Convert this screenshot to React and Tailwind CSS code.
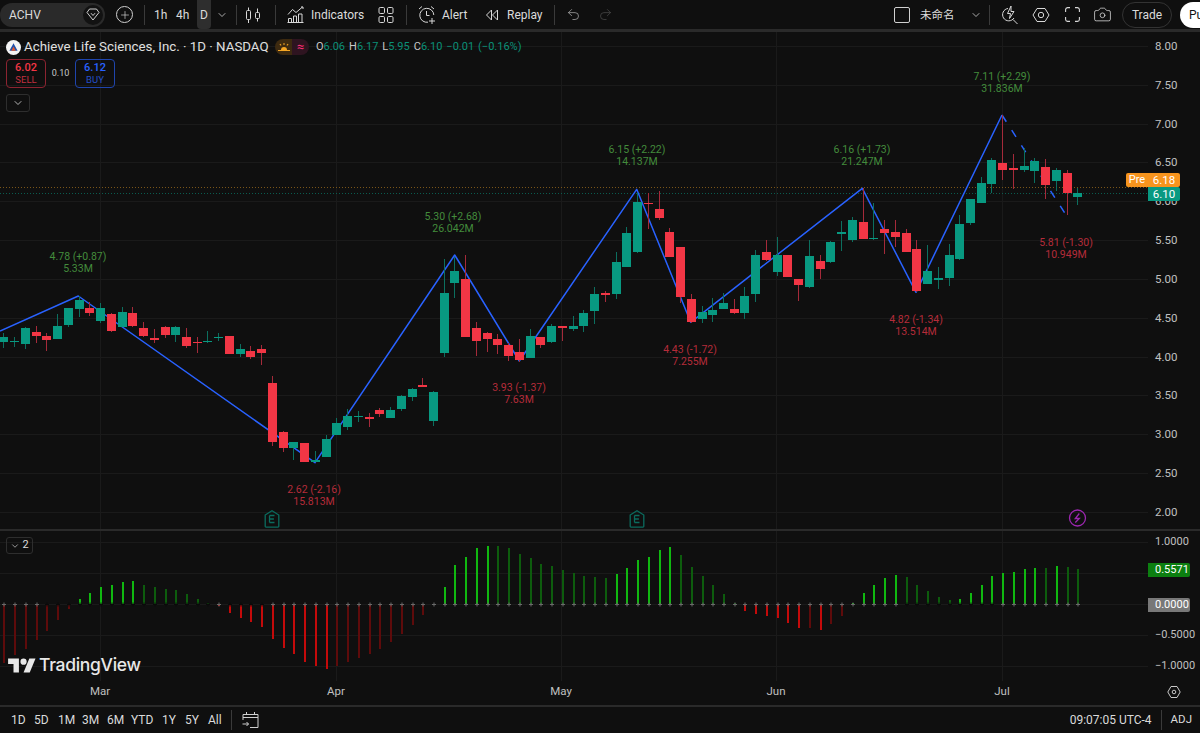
import { ChevronDown, Undo2, Redo2, Camera, Plus } from 'lucide-react';

const GREEN = '#089981';
const RED = '#f23645';
const GREEN_WICK = '#0c6f5f';
const RED_WICK = '#a52a3a';

// rows: color, wick top, body top, body bottom, wick bottom (read off the zoomed crops)
const group = (offset, rows) =>
    rows.map(([c, a, b, d, e]) => ({ c, a: offset + a / 3, b: offset + b / 3, d: offset + d / 3, e: offset + e / 3 }));

const candles = [
    ...group(240, [
        ['g', 280, 292, 305, 323], ['g', 290, 303, 307, 320], ['g', 262, 263, 311, 328], ['r', 258, 277, 288, 308],
        ['r', 278, 287, 299, 332], ['g', 222, 259, 296, 297], ['g', 203, 205, 254, 260], ['g', 168, 179, 207, 232],
        ['r', 187, 203, 220, 228], ['g', 190, 205, 244, 250], ['r', 220, 221, 274, 275], ['g', 200, 215, 262, 262],
        ['r', 200, 219, 258, 260], ['r', 247, 265, 288, 290], ['r', 267, 293, 299, 310], ['r', 258, 262, 284, 295],
        ['g', 257, 262, 284, 305], ['r', 263, 292, 318, 325], ['r', 292, 306, 310, 338], ['g', 273, 303, 306, 310],
        ['g', 280, 291, 293, 303], ['r', 287, 288, 341, 342], ['g', 312, 328, 341, 352], ['r', 318, 332, 351, 356],
        ['r', 316, 326, 339, 375], ['r', 408, 428, 606, 617], ['r', 572, 576, 624, 635], ['g', 606, 607, 624, 660],
        ['r', 610, 610, 665, 665], ['g', 633, 660, 665, 665], ['g', 586, 596, 651, 651], ['g', 534, 549, 584, 585],
        ['g', 508, 529, 560, 570], ['g', 514, 528, 531, 546], ['r', 520, 531, 536, 560], ['r', 505, 509, 521, 530],
        ['g', 500, 509, 534, 535], ['g', 465, 469, 506, 512], ['g', 445, 446, 471, 484], ['r', 413, 436, 441, 442],
        ['g', 452, 455, 542, 558],
    ]),
    ...group(140, [
        ['g', 357, 460, 638, 652], ['g', 350, 393, 429, 473], ['r', 345, 416, 592, 592], ['r', 545, 565, 602, 647],
        ['r', 575, 580, 596, 635], ['r', 582, 596, 614, 643], ['r', 608, 614, 647, 662], ['r', 598, 636, 659, 665],
        ['g', 568, 587, 653, 655], ['r', 590, 591, 614, 625], ['g', 553, 558, 606, 608], ['r', 558, 558, 563, 603],
        ['g', 527, 559, 568, 572], ['g', 510, 519, 558, 575], ['g', 440, 462, 514, 553], ['r', 452, 460, 466, 486],
        ['g', 335, 367, 461, 476], ['g', 262, 279, 380, 380], ['g', 160, 186, 337, 338], ['r', 160, 188, 193, 268],
        ['r', 152, 207, 234, 240], ['r', 263, 277, 350, 350], ['r', 322, 322, 471, 490], ['r', 463, 478, 547, 548],
        ['g', 498, 517, 536, 548], ['g', 475, 509, 524, 545], ['g', 460, 488, 506, 506], ['r', 476, 508, 520, 521],
        ['g', 440, 468, 518, 537],
    ]),
    ...group(90, [
        ['g', 480, 496, 613, 636], ['r', 450, 486, 511, 512], ['g', 442, 495, 545, 558], ['r', 495, 495, 561, 561],
        ['r', 566, 566, 585, 634], ['g', 450, 499, 591, 595], ['r', 495, 514, 537, 566], ['g', 453, 456, 515, 520],
        ['g', 394, 427, 431, 483], ['g', 382, 391, 450, 456], ['r', 295, 395, 446, 447], ['g', 340, 445, 447, 450],
        ['r', 390, 418, 428, 492], ['r', 390, 427, 440, 470], ['r', 418, 429, 485, 486], ['r', 450, 476, 604, 606],
        ['g', 465, 544, 581, 583], ['g', 530, 565, 570, 597], ['g', 463, 496, 563, 587], ['g', 375, 403, 508, 510],
        ['g', 328, 328, 398, 405], ['g', 260, 280, 340, 340], ['g', 205, 210, 281, 310], ['r', 75, 219, 241, 270],
        ['r', 192, 235, 241, 296], ['g', 175, 228, 240, 245], ['g', 205, 213, 243, 278], ['r', 208, 232, 285, 328],
        ['g', 235, 240, 273, 303], ['r', 240, 248, 310, 375], ['g', 293, 310, 321, 345],
    ]),
];

const barX = (i) => 3.4 + 10.74 * i;

const pivots = '0,331 78.3,296 315,462.7 454.7,255 519.3,361 636.7,189.3 690.7,322.3 862.3,188.3 916,292.3 1002,115';

const labels = [
    { x: 78, y: 251, t: '4.78 (+0.87)', v: '5.33M', up: true },
    { x: 453, y: 211, t: '5.30 (+2.68)', v: '26.042M', up: true },
    { x: 637, y: 144, t: '6.15 (+2.22)', v: '14.137M', up: true },
    { x: 862, y: 144, t: '6.16 (+1.73)', v: '21.247M', up: true },
    { x: 1002, y: 71, t: '7.11 (+2.29)', v: '31.836M', up: true },
    { x: 314, y: 484, t: '2.62 (-2.16)', v: '15.813M' },
    { x: 519, y: 382, t: '3.93 (-1.37)', v: '7.63M' },
    { x: 690, y: 344, t: '4.43 (-1.72)', v: '7.255M' },
    { x: 916, y: 314, t: '4.82 (-1.34)', v: '13.514M' },
    { x: 1066, y: 237, t: '5.81 (-1.30)', v: '10.949M' },
];

const prices = ['8.00', '7.50', '7.00', '6.50', '6.00', '5.50', '5.00', '4.50', '4.00', '3.50', '3.00', '2.50', '2.00'];
const priceY = (i) => 46 + i * 38.83;
const months = [100.5, 336.5, 561.5, 776.5, 1002.5];

// histogram tips: [zoom y, bright?] per bar
const histA = [
    [398, 0], [375, 0], [356, 0], [330, 0], [302, 0], [269, 0], [238, 0], [208, 1], [188, 1], [172, 1], [165, 1],
    [156, 1], [153, 1], [165, 0], [172, 0], [178, 0], [181, 0], [192, 0], [207, 0], [220, 0], [228, 1], [250, 1],
    [263, 1], [276, 1], [291, 1], [326, 1], [354, 1], [371, 1], [395, 1], [408, 1], [417, 1], [408, 0], [397, 0],
    [385, 0], [373, 0], [356, 0], [336, 0], [312, 0], [284, 0], [255, 0], [222, 0], [170, 1], [105, 1], [80, 1],
    [53, 1], [47, 1], [47, 0], [55, 0], [73, 0], [85, 0], [101, 0], [109, 0], [120, 0], [130, 0], [138, 0], [140, 0],
].map(([z, b]) => [530 + z / 3, b]);
const histB = [
    [234, 0], [222, 1], [204, 1], [180, 1], [170, 1], [150, 1], [141, 1], [165, 0], [200, 0], [228, 0], [256, 0],
    [282, 0], [310, 0], [333, 1], [341, 1], [347, 1], [353, 1], [369, 1], [385, 1], [385, 0], [389, 1], [372, 0],
    [347, 0], [308, 1], [280, 1], [254, 1], [234, 1], [226, 1], [232, 0], [256, 0], [272, 0], [291, 0], [300, 0],
    [298, 1], [279, 1], [255, 1], [228, 1], [219, 1], [216, 1], [207, 1], [204, 1], [205, 0], [199, 1], [201, 0], [207, 0],
].map(([z, b]) => [500 + z / 3, b]);
const hist = [...histA, ...histB];
const ZERO = 604;

const isDarkCross = (i) => (i >= 4 && i <= 19) || (i >= 21 && i <= 24) || (i >= 84 && i <= 92);

const Sep = ({ className = '' }) => <div className={`w-px h-[20px] bg-[#3a3a3a] shrink-0 ${className}`} />;

const EMark = ({ x }) => (
    <g transform={`translate(${x - 7.5} 510)`} fill="none" stroke="#0b6b5e" strokeWidth="1.3">
        <path d="M.7 5 7.5.8 14.3 5v11.3a.8.8 0 0 1-.8.8h-12a.8.8 0 0 1-.8-.8z" />
        <path d="M5 5.5h5M5 9h4.4M5 12.5h5M5 5.5v7" />
    </g>
);

export default function App() {
    return (
        <div className="w-[1200px] h-[733px] overflow-hidden bg-[#0f0f0f] text-[#dbdbdb] text-[12px] font-['Roboto','Liberation_Sans',sans-serif] flex flex-col">
            {/* Top toolbar */}
            <div className="h-[29px] shrink-0 flex items-center text-[12px] relative">
                <div className="w-[105px] h-[24px] rounded-full bg-[#2a2a2a] flex items-center justify-between pl-[9px] pr-[2px] shrink-0">
                    <span className="text-[12px]">ACHV</span>
                    <span className="w-[20px] h-[20px] rounded-full bg-[#121212] flex items-center justify-center">
                        <svg width="14" height="13" viewBox="0 0 14 13" fill="none" stroke="#d0d0d0" strokeWidth="1">
                            <path d="M3.5 1h7L13 4.5 7 12 1 4.5z" />
                            <path d="M5 5.2 7 7.5l2-2.3" />
                        </svg>
                    </span>
                </div>
                <div className="w-[39px] flex items-center justify-center shrink-0">
                    <span className="w-[17px] h-[17px] rounded-full border border-[#d0d0d0] flex items-center justify-center">
                        <Plus size={12} strokeWidth={1.3} />
                    </span>
                </div>
                <Sep />
                <span className="ml-[9px] w-[15px]">1h</span>
                <span className="ml-[7px] w-[15px]">4h</span>
                <span className="ml-[6px] w-[14px] h-[29px] bg-[#2e2e2e] rounded-b-[4px] flex items-center justify-center text-[12px]">D</span>
                <ChevronDown size={12} strokeWidth={1.5} className="ml-[5px]" />
                <Sep className="ml-[8px]" />
                <svg className="ml-[8px]" width="16" height="18" viewBox="0 0 16 18" fill="none" stroke="#d8d8d8" strokeWidth="1">
                    <rect x="1.5" y="4.5" width="4" height="9" rx="1" />
                    <rect x="10.5" y="6.5" width="4" height="6" rx="1" />
                    <path d="M3.5 1.5v3M3.5 13.5v3.5M12.5 2.5v4M12.5 12.5v3" />
                </svg>
                <Sep className="ml-[14px]" />
                <svg className="ml-[11px]" width="17" height="17" viewBox="0 0 17 17" fill="none" stroke="#d8d8d8" strokeWidth="1">
                    <path d="M1 8.5 5.5 3.5l3.5 3L15.5 1M14 1h2v2" />
                    <path d="M1.500 16v-3.500h3V16M6.500 16v-6h3v6M11.500 16V8h3.500v8M.5 16.500h16" />
                </svg>
                <span className="ml-[7px] w-[52px] whitespace-nowrap">Indicators</span>
                <svg className="ml-[15px]" width="16" height="16" viewBox="0 0 16 16" fill="none" stroke="#d8d8d8" strokeWidth="1">
                    <rect x="1" y=".5" width="5.5" height="6" rx="1.2" />
                    <rect x="9.5" y=".5" width="5.5" height="6" rx="1.2" />
                    <rect x="1" y="9.5" width="5.5" height="6" rx="1.2" />
                    <rect x="9.5" y="9.5" width="5.5" height="6" rx="1.2" />
                </svg>
                <Sep className="ml-[12px]" />
                <svg className="ml-[11px]" width="18" height="20" viewBox="0 0 18 20" fill="none" stroke="#d8d8d8" strokeWidth="1">
                    <path d="M10 17.2A7 7 0 1 1 15.8 10" />
                    <path d="M8.5 6v4.5h3M1 4 4 1.5M16 4l-3-2.5M14 13v6M11 16h6" />
                </svg>
                <span className="ml-[6px] w-[26px]">Alert</span>
                <svg className="ml-[17px]" width="14" height="14" viewBox="0 0 14 14" fill="none" stroke="#d8d8d8" strokeWidth="1">
                    <path d="M6.5 2 1.5 7l5 5zM12.5 2l-5 5 5 5z" />
                </svg>
                <span className="ml-[8px] w-[36px]">Replay</span>
                <Sep className="ml-[11px]" />
                <Undo2 size={15} strokeWidth={1.2} className="ml-[11px] text-[#a8a8a8]" />
                <Redo2 size={15} strokeWidth={1.2} className="ml-[17px] text-[#4a4a4a]" />

                <div className="ml-auto flex items-center shrink-0">
                    <span className="w-[16px] h-[16px] rounded-[2px] border border-[#d0d0d0]" />
                    <span className="ml-[10px] w-[36px] text-[11.5px] font-['Noto_Sans_CJK_SC','Noto_Sans',sans-serif]">未命名</span>
                    <ChevronDown size={12} strokeWidth={1.5} className="ml-[14px]" />
                    <Sep className="ml-[7px]" />
                    <svg className="ml-[11px]" width="18" height="20" viewBox="0 0 18 20" fill="none" stroke="#d8d8d8" strokeWidth="1">
                        <path d="M7 3.5A6.2 6.2 0 1 0 13 13M12 14.5l4.5 4.5" />
                        <path d="M10 1 6.5 8.5h3l-1 5 4.5-7h-3z" />
                    </svg>
                    <svg className="ml-[13px]" width="18" height="18" viewBox="0 0 18 18" fill="none" stroke="#d8d8d8" strokeWidth="1">
                        <path d="M5 2.5h8L17 9l-4 6.5H5L1 9z" />
                        <circle cx="9" cy="9" r="2.7" />
                    </svg>
                    <svg className="ml-[15px]" width="15" height="15" viewBox="0 0 15 15" fill="none" stroke="#d8d8d8" strokeWidth="1.1">
                        <path d="M.6 5V2.500A2 2 0 0 1 2.500.6H5M10 .6h2.500a2 2 0 0 1 1.900 1.900V5M14.400 10v2.500a2 2 0 0 1-1.900 1.900H10M5 14.400H2.500a2 2 0 0 1-1.900-1.900V10" />
                    </svg>
                    <Camera size={19} strokeWidth={1} className="ml-[13px] text-[#d8d8d8]" />
                    <span className="ml-[10px] w-[50px] h-[26px] rounded-full border border-[#333] flex items-center justify-center text-[12px]">Trade</span>
                    <span className="ml-[8px] w-[20px] h-[26px] rounded-l-full bg-white text-[#111] pl-[9px] overflow-hidden leading-[26px] text-[12px]">Pu</span>
                </div>
            </div>
            <div className="h-[3px] shrink-0 bg-[#2a2a2a]" />

            {/* Price pane */}
            <div className="h-[497px] shrink-0 flex">
                <div className="relative w-[1148px] shrink-0">
                    <svg className="absolute inset-0" width="1148" height="497" viewBox="0 32 1148 497">
                        <g stroke="#1a1a1a" strokeWidth="1" shapeRendering="crispEdges">
                            {prices.map((p, i) => (
                                <line key={p} x1="0" x2="1148" y1={Math.round(priceY(i)) + 0.5} y2={Math.round(priceY(i)) + 0.5} />
                            ))}
                            {months.map((m) => (
                                <line key={m} x1={m} x2={m} y1="32" y2="529" />
                            ))}
                        </g>
                        <line x1="0" x2="1148" y1="187.5" y2="187.5" stroke="#7a5518" strokeDasharray="1 2" />
                        <line x1="0" x2="1148" y1="193.5" y2="193.5" stroke="#0a5c4f" strokeDasharray="1 2" />
                        <polyline points={pivots} fill="none" stroke="#2962ff" strokeWidth="1.5" strokeLinejoin="round" />
                        <line x1="1002" y1="115" x2="1066" y2="215" stroke="#2962ff" strokeWidth="1.5" strokeDasharray="8 10" />
                        <g shapeRendering="crispEdges">
                            {candles.map((k, i) => {
                                const x = Math.round(barX(i));
                                return (
                                    <g key={i}>
                                        <line x1={x + 0.5} x2={x + 0.5} y1={k.a} y2={k.e} stroke={k.c === 'g' ? GREEN_WICK : RED_WICK} />
                                        <rect x={x - 4} y={k.b} width="9" height={Math.max(k.d - k.b, 1)} fill={k.c === 'g' ? GREEN : RED} />
                                    </g>
                                );
                            })}
                        </g>
                        <EMark x={272} />
                        <EMark x={637} />
                        <g transform="translate(1077.500 518)" fill="none" stroke="#9c27b0" strokeWidth="1.3">
                            <circle r="8" />
                            <path d="M1.800-4.500-2.200.5h4l-4 4" />
                        </g>
                    </svg>

                    {/* Legend */}
                    <div className="absolute left-[6px] top-[7px] flex items-center h-[16px] whitespace-nowrap">
                        <svg width="15" height="15" viewBox="0 0 15 15">
                            <circle cx="7.500" cy="7.500" r="7.500" fill="#f4f4f4" />
                            <path d="M7.500 3.200 11.600 10.800H3.400z" fill="#1f4fa8" />
                            <path d="M7.500 6.500 9.700 10.800H5.300z" fill="#e2572b" />
                        </svg>
                        <span className="ml-[3px] w-[245px] text-[13.3px] text-[#e0e0e0]">Achieve Life Sciences, Inc. · 1D · NASDAQ</span>
                        <span className="ml-[6px] h-[16px] w-[34px] rounded-full overflow-hidden flex">
                            <span className="w-[17px] bg-[#3d2a10] flex items-center justify-center">
                                <svg width="12" height="10" viewBox="0 0 12 10" fill="#f5a623">
                                    <path d="M3 8a3 3 0 0 1 6 0zM0 8h12v1H0zM5.500 1h1v2h-1zM1.500 2.500l.7-.7 1.300 1.300-.7.7zM10.500 2.500l-.7-.7-1.300 1.300.7.7z" />
                                </svg>
                            </span>
                            <span className="w-[17px] bg-[#2e1420] text-[#ff2d78] text-[13px] leading-[15px] text-center">≈</span>
                        </span>
                        <span className="ml-[7px] flex text-[11px] text-[#0b9078] gap-[4px]">
                            <span><span className="text-[#c8c8c8]">O</span>6.06</span>
                            <span><span className="text-[#c8c8c8]">H</span>6.17</span>
                            <span><span className="text-[#c8c8c8]">L</span>5.95</span>
                            <span><span className="text-[#c8c8c8]">C</span>6.10</span>
                            <span>−0.01</span>
                            <span>(−0.16%)</span>
                        </span>
                    </div>

                    {/* Buy / sell */}
                    <div className="absolute left-[6px] top-[27px] flex items-center">
                        <div className="w-[40px] h-[29px] rounded-[4px] border border-[#8c2431] flex flex-col items-center justify-center leading-[12px] text-[#f23645]">
                            <span className="text-[11px] font-medium">6.02</span>
                            <span className="text-[9.5px] text-[#c0303f]">SELL</span>
                        </div>
                        <span className="w-[29px] text-center text-[9px] text-[#c8c8c8]">0.10</span>
                        <div className="w-[40px] h-[29px] rounded-[4px] border border-[#1f45ad] flex flex-col items-center justify-center leading-[12px] text-[#2962ff]">
                            <span className="text-[11px] font-medium">6.12</span>
                            <span className="text-[9.5px] text-[#2450c8]">BUY</span>
                        </div>
                    </div>
                    <div className="absolute left-[6px] top-[62px] w-[24px] h-[18px] rounded-[3px] border border-[#2e2e2e] flex items-center justify-center">
                        <ChevronDown size={12} strokeWidth={1.6} />
                    </div>

                    {/* Pivot labels */}
                    {labels.map((l) => (
                        <div
                            key={l.t}
                            className={`absolute -translate-x-1/2 text-center text-[10.5px] leading-[12px] whitespace-nowrap ${l.up ? 'text-[#438c3c]' : 'text-[#b52c3a]'}`}
                            style={{ left: l.x, top: l.y - 32 }}
                        >
                            <div>{l.t}</div>
                            <div>{l.v}</div>
                        </div>
                    ))}

                    {/* Pre tag sits over the chart edge */}
                    <div className="absolute right-0 top-[141px] w-[22px] h-[14px] bg-[#f7941d] text-white text-[11px] leading-[14px] text-center rounded-l-[2px]">Pre</div>
                </div>

                {/* Price axis */}
                <div className="relative flex-1 text-[11.5px] text-[#c0c0c0]">
                    {prices.map((p, i) => (
                        <span key={p} className="absolute left-[7px] leading-[14px]" style={{ top: priceY(i) - 7 - 32 }}>{p}</span>
                    ))}
                    <div className="absolute left-0 top-[141px] w-[32px] h-[14px] bg-[#f7941d] text-white leading-[14px] text-center rounded-r-[2px]">6.18</div>
                    <div className="absolute left-0 top-[155px] w-[32px] h-[14px] bg-[#089981] text-white leading-[14px] text-center rounded-r-[2px]">6.10</div>
                </div>
            </div>
            <div className="h-[2px] shrink-0 bg-[#2a2a2a]" />

            {/* Indicator pane + time axis */}
            <div className="flex-1 flex min-h-0">
                <div className="relative w-[1148px] shrink-0">
                    <svg className="absolute inset-0" width="1148" height="174" viewBox="0 531 1148 174">
                        <g stroke="#1a1a1a" shapeRendering="crispEdges">
                            {[542, 573, 604, 635, 666].map((y) => (
                                <line key={y} x1="0" x2="1148" y1={y + 0.5} y2={y + 0.5} />
                            ))}
                            {months.map((m) => (
                                <line key={m} x1={m} x2={m} y1="531" y2="681" />
                            ))}
                        </g>
                        <g shapeRendering="crispEdges">
                            {hist.map(([tip, bright], i) => {
                                const up = tip < ZERO;
                                const color = up ? (bright ? '#10b810' : '#0d5c0d') : bright ? '#c40a0a' : '#5e0b0b';
                                return (
                                    <rect key={i} x={Math.round(barX(i))} y={Math.min(tip, ZERO)} width="2" height={Math.abs(tip - ZERO)} fill={color} />
                                );
                            })}
                        </g>
                        {hist.map((_, i) => {
                            const x = Math.round(barX(i)) + 1;
                            return (
                                <path key={i} d={`M${x - 2} ${ZERO + 0.5}h4M${x} ${ZERO - 1.5}v4`} stroke={isDarkCross(i) ? '#0a0a0a' : '#6a6a6a'} strokeWidth="1" />
                            );
                        })}
                    </svg>

                    <div className="absolute left-[6px] top-[6px] w-[27px] h-[17px] rounded-[3px] border border-[#2e2e2e] flex items-center justify-center gap-[2px] text-[11px]">
                        <ChevronDown size={10} strokeWidth={1.6} />
                        <span>2</span>
                    </div>

                    {/* TradingView attribution */}
                    <div className="absolute left-[8px] top-[124px] flex items-center gap-[3px] text-[#e8e8e8]">
                        <svg width="28" height="17" viewBox="0 2 36 22" fill="currentColor">
                            <path d="M14 22H7V11H0V4h14v18zM28 22h-8l7.500-18h8L28 22z" />
                            <circle cx="20" cy="8" r="4" />
                        </svg>
                        <span className="text-[17.5px] font-['Inter',sans-serif] font-medium tracking-[-0.3px] leading-[20px]">TradingView</span>
                    </div>

                    {/* Time axis labels */}
                    {[['Mar', 100], ['Apr', 336], ['May', 561], ['Jun', 776], ['Jul', 1002]].map(([m, x]) => (
                        <span key={m} className="absolute top-[153px] -translate-x-1/2 text-[11.5px] leading-[14px] text-[#c0c0c0]" style={{ left: x }}>{m}</span>
                    ))}
                </div>

                <div className="relative flex-1 text-[11px] text-[#c0c0c0]">
                    {[['1.0000', 542], ['−0.5000', 635], ['−1.0000', 666]].map(([v, y]) => (
                        <span key={v} className="absolute left-[7px] leading-[14px] whitespace-nowrap" style={{ top: y - 7 - 531 }}>{v}</span>
                    ))}
                    <div className="absolute left-0 top-[32px] w-[42px] h-[14px] bg-[#0c7f10] text-white leading-[14px] pl-[7px] rounded-r-[2px]">0.5571</div>
                    <div className="absolute left-0 top-[67px] w-[42px] h-[14px] bg-[#787878] text-white leading-[14px] pl-[7px] rounded-r-[2px]">0.0000</div>
                    <svg className="absolute left-[19px] top-[154px]" width="14" height="14" viewBox="0 0 14 14" fill="none" stroke="#c8c8c8" strokeWidth="1">
                        <path d="M4 1.500h6L13.200 7 10 12.500H4L.8 7z" />
                        <circle cx="7" cy="7" r="1.800" />
                    </svg>
                </div>
            </div>

            {/* Bottom bar */}
            <div className="h-[2px] shrink-0 bg-[#2a2a2a]" />
            <div className="h-[26px] shrink-0 flex items-center text-[12px] pl-[11px]">
                <span className="w-[23px]">1D</span>
                <span className="w-[24px]">5D</span>
                <span className="w-[24px]">1M</span>
                <span className="w-[25px]">3M</span>
                <span className="w-[24px]">6M</span>
                <span className="w-[31px]">YTD</span>
                <span className="w-[23px]">1Y</span>
                <span className="w-[23px]">5Y</span>
                <span className="w-[22px]">All</span>
                <Sep className="ml-[1px]" />
                <svg className="ml-[10px]" width="17" height="18" viewBox="0 0 17 18" fill="none" stroke="#d0d0d0" strokeWidth="1">
                    <path d="M1 9V3.500h15V16.500H8M1 6.500h15M4.500 1v3M12.500 1v3M.5 13h6M4.500 11l2 2-2 2" />
                </svg>
                <span className="ml-auto">09:07:05 UTC-4</span>
                <Sep className="ml-[9px]" />
                <span className="ml-[9px] mr-[8px] text-[11.5px]">ADJ</span>
            </div>
        </div>
    );
}
